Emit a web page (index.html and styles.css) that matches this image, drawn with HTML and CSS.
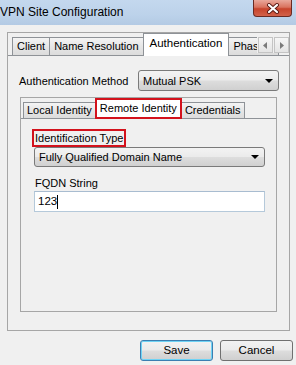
FILE: index.html
```html
<!DOCTYPE html>
<html>

<head>
    <meta charset="utf-8">
    <title>VPN Site Configuration</title>
    <link rel="stylesheet" href="styles.css">
</head>

<body>
    <div class="window">
        <!-- title bar -->
        <div class="titlebar">
            <span class="title">VPN Site Configuration</span>
            <div class="close">
                <svg width="14" height="11" viewBox="0 0 14 11">
                    <path d="M3 2 L11 9 M11 2 L3 9" stroke="#5a1a14" stroke-width="4" stroke-linecap="round" />
                    <path d="M3 2 L11 9 M11 2 L3 9" stroke="#fff" stroke-width="2.2" stroke-linecap="round" />
                </svg>
            </div>
        </div>

        <div class="client">
            <!-- outer tabs -->
            <div class="frame outer">
                <div class="tabrow">
                    <div class="tab">Client</div>
                    <div class="tab">Name Resolution</div>
                    <div class="tab active">Authentication</div>
                    <div class="tab">Phase 1</div>
                    <div class="scroller">
                        <span class="arr">
                            <svg width="5" height="7" viewBox="0 0 5 7"><path d="M4 0 L0 3.5 L4 7 Z" fill="#7a7a7a" /></svg>
                        </span>
                        <span class="arr">
                            <svg width="5" height="7" viewBox="0 0 5 7"><path d="M1 0 L5 3.5 L1 7 Z" fill="#7a7a7a" /></svg>
                        </span>
                    </div>
                </div>
                <div class="panel outer-panel">
                    <div class="row">
                        <span class="lbl">Authentication Method</span>
                        <div class="combo method">
                            <span>Mutual PSK</span>
                            <i class="caret"></i>
                        </div>
                    </div>

                    <!-- inner tabs -->
                    <div class="frame inner">
                        <div class="tabrow">
                            <div class="tab">Local Identity</div>
                            <div class="tab active marked">Remote Identity</div>
                            <div class="tab">Credentials</div>
                        </div>
                        <div class="panel inner-panel">
                            <span class="lbl marked-lbl">Identification Type</span>
                            <div class="combo idtype">
                                <span>Fully Qualified Domain Name</span>
                                <i class="caret"></i>
                            </div>
                            <div class="lbl field-lbl">FQDN String</div>
                            <div class="textbox">123<span class="cursor"></span></div>
                        </div>
                    </div>
                </div>
            </div>

            <div class="buttons">
                <div class="btn default">Save</div>
                <div class="btn">Cancel</div>
            </div>
        </div>
    </div>
</body>

</html>
```

FILE: styles.css
```css
* {
    box-sizing: border-box;
}

body {
    margin: 0;
    font-family: "Liberation Sans", Arial, sans-serif;
    font-size: 11px;
    color: #000;
    background: #f0f0f0;
}

.window {
    width: 296px;
    height: 365px;
    overflow: hidden;
    background: #f0f0f0;
}

/* title bar */
.titlebar {
    height: 25px;
    display: flex;
    justify-content: space-between;
    align-items: flex-start;
    background: linear-gradient(#c4d8ee, #bcd2ea 60%, #b3cae4);
}

.title {
    font-size: 12px;
    line-height: 25px;
}

.close {
    width: 39px;
    height: 17px;
    margin-right: 4px;
    border: 1px solid #6a2a22;
    border-top: none;
    border-radius: 0 0 4px 4px;
    background: linear-gradient(#e9a89b, #d9735f 45%, #c7442c 55%, #d2624a);
    display: flex;
    align-items: center;
    justify-content: center;
}

.client {
    padding: 7px 0 0 7px;
}

/* tab frames */
.frame {
    border: 1px solid #a6a6a6;
    display: flex;
    flex-direction: column;
}

.outer {
    width: 283px;
    height: 299px;
}

.tabrow {
    display: flex;
    align-items: flex-end;
    border-bottom: 1px solid #8e9297;
    position: relative;
    overflow-x: clip;
}

.outer .tabrow {
    height: 23px;
    padding-left: 4px;
}

.tab {
    flex-shrink: 0;
    height: 18px;
    line-height: 16px;
    padding: 0 4px;
    border: 1px solid #8e9297;
    border-bottom: none;
    margin-right: -1px;
    background: linear-gradient(#f4f4f4, #e6e6e6 50%, #dcdcdc);
    white-space: nowrap;
}

.tab.active {
    height: 23px;
    margin-bottom: -1px;
    padding: 0 6px;
    line-height: 19px;
    background: #fff;
    position: relative;
    z-index: 1;
    font-size: 11.5px;
}

.scroller {
    position: absolute;
    right: 0;
    top: 4px;
    display: flex;
    gap: 1px;
    background: #f0f0f0;
    padding-left: 1px;
    z-index: 2;
}

.arr {
    width: 15px;
    height: 16px;
    border: 1px solid #c4c4c4;
    background: linear-gradient(#f6f6f6, #e4e4e4);
    display: flex;
    align-items: center;
    justify-content: center;
}

.panel {
    flex: 1;
}

.outer-panel {
    padding: 14px 10px 0 11px;
}

.row {
    display: flex;
    align-items: center;
    height: 21px;
}

.combo {
    height: 21px;
    border: 1px solid #7a7a7a;
    border-radius: 3px;
    background: linear-gradient(#f3f3f3, #ebebeb 48%, #dddddd 52%, #d0d0d0);
    display: flex;
    align-items: center;
    justify-content: space-between;
    padding: 0 5px 0 4px;
}

.method {
    width: 141px;
    margin-left: auto;
}

.caret {
    width: 0;
    height: 0;
    border-left: 4px solid transparent;
    border-right: 4px solid transparent;
    border-top: 4px solid #000;
}

/* inner tabs */
.inner {
    height: 215px;
    margin: 6px 2px 0 1px;
}

.inner .tabrow {
    height: 21px;
    padding-left: 2px;
}

.inner .tab {
    height: 16px;
    line-height: 15px;
    padding: 0 3px;
}

.inner .tab.active {
    height: 21px;
    padding: 0 4px;
    line-height: 19px;
    font-size: 11px;
}

.marked {
    outline: 2px solid #d3121c;
    outline-offset: -2px;
}

.inner-panel {
    padding: 10px 11px 0 11px;
}

.marked-lbl {
    display: inline-block;
    height: 18px;
    line-height: 14px;
    padding: 0 1px;
    border: 2px solid #d3121c;
}

.idtype {
    width: 231px;
    height: 20px;
    margin-left: 2px;
}

.field-lbl {
    margin: 10px 0 1px 3px;
    line-height: 13px;
}

.textbox {
    width: 231px;
    height: 21px;
    margin-left: 2px;
    border: 1px solid #b5c9da;
    border-top-color: #a8bcd0;
    background: #fff;
    padding-left: 3px;
    line-height: 19px;
    font-size: 11.5px;
    display: flex;
    align-items: center;
}

.cursor {
    width: 1px;
    height: 14px;
    background: #000;
}

/* buttons */
.buttons {
    display: flex;
    justify-content: flex-end;
    gap: 7px;
    margin-top: 9px;
    padding-right: 3px;
}

.btn {
    width: 73px;
    height: 21px;
    border: 1px solid #707070;
    border-radius: 3px;
    background: linear-gradient(#f2f2f2, #ebebeb 48%, #dddddd 52%, #cfcfcf);
    text-align: center;
    line-height: 19px;
    font-size: 11.5px;
}

.btn.default {
    border-color: #3c7fb1;
    box-shadow: inset 0 0 0 1px #6fd3f5;
}
```
